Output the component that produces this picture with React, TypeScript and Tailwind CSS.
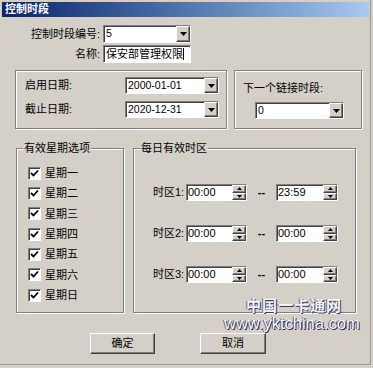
import React from 'react'

const FONT = "font-['Liberation_Sans','Noto_Sans_CJK_SC',sans-serif]"

const sunken =
  'border border-t-[#808080] border-l-[#808080] border-b-white border-r-white bg-white shadow-[inset_1px_1px_0_#404040]'
const raised =
  'bg-[#d4d0c8] border border-t-white border-l-white border-b-[#404040] border-r-[#404040] shadow-[inset_-1px_-1px_0_#808080]'
const etched = 'border border-[#808080] shadow-[inset_1px_1px_0_white,1px_1px_0_white]'

const Arrow = ({ up = false, w = 7, h = 4 }: { up?: boolean; w?: number; h?: number }) => (
  <svg width={w} height={h} viewBox="0 0 7 4">
    {up ? <polygon points="0,4 7,4 3.5,0" fill="#000" /> : <polygon points="0,0 7,0 3.5,4" fill="#000" />}
  </svg>
)

interface ComboProps {
  value: string;
  className?: string;
}

const Combo: React.FC<ComboProps> = ({ value, className = '' }) => (
  <div className={`flex items-stretch h-[17px] ${sunken} ${className}`}>
    <span className="flex-1 pl-[2px] text-[10.5px] leading-[15px] text-black whitespace-nowrap">{value}</span>
    <div className={`w-[14px] flex items-center justify-center ${raised}`}>
      <Arrow />
    </div>
  </div>
)

const TimeBox: React.FC<{ value: string; className?: string }> = ({ value, className = '' }) => (
  <div className={`flex items-stretch h-[17px] ${sunken} ${className}`}>
    <span className="flex-1 pl-[1px] text-[11px] leading-[15px] text-black">{value}</span>
    <div className="w-[14px] flex flex-col">
      <div className={`flex-1 flex items-center justify-center ${raised}`}>
        <Arrow up w={5} h={3} />
      </div>
      <div className={`flex-1 flex items-center justify-center ${raised}`}>
        <Arrow w={5} h={3} />
      </div>
    </div>
  </div>
)

const CheckBox = () => (
  <div className={`w-[13px] h-[13px] flex items-center justify-center ${sunken}`}>
    <svg width="9" height="9" viewBox="0 0 9 9">
      <path d="M1 4 L3.5 6.5 L8 1.5" stroke="#000" strokeWidth="1.8" fill="none" />
    </svg>
  </div>
)

const days = ['星期一', '星期二', '星期三', '星期四', '星期五', '星期六', '星期日']
const zones = [
  { label: '时区1:', from: '00:00', to: '23:59' },
  { label: '时区2:', from: '00:00', to: '00:00' },
  { label: '时区3:', from: '00:00', to: '00:00' },
]

export default function App() {
  return (
    <div className={`w-[373px] h-[368px] bg-[#d4d0c8] relative overflow-hidden text-[11px] text-black ${FONT}`}>
      <div className="w-[371px] h-[365px] border-r border-b border-[#9c9a94] flex flex-col">
        {/* Title bar */}
        <div className="ml-[2px] mr-[1px] mt-[2px] h-[15px] bg-gradient-to-r from-[#0a246a] to-[#a6caf0] flex items-center pl-[3px]">
          <span className="text-white font-bold text-[11px] leading-none">控制时段</span>
        </div>

        {/* Top fields */}
        <div className="mt-[8px] flex items-center h-[18px] whitespace-nowrap">
          <span className="w-[101px] text-right pr-[1px]">控制时段编号:</span>
          <Combo value="5" className="ml-[2px] w-[88px] h-[18px]" />
        </div>
        <div className="mt-[2px] flex items-center h-[18px] whitespace-nowrap">
          <span className="w-[101px] text-right pr-[1px]">名称:</span>
          <div className={`ml-[2px] w-[88px] h-[18px] flex items-center ${sunken}`}>
            <span className="pl-[2px] leading-[15px]">保安部管理权限</span>
            <span className="w-px h-[12px] bg-black" />
          </div>
        </div>

        {/* Date groups */}
        <div className="mt-[7px] flex pl-[15px] gap-[7px] whitespace-nowrap">
          <div className={`w-[212px] h-[59px] ${etched} flex flex-col pt-[6px] pl-[9px] gap-[7px]`}>
            <div className="flex items-center h-[17px]">
              <span className="w-[100px]">启用日期:</span>
              <Combo value="2000-01-01" className="w-[94px]" />
            </div>
            <div className="flex items-center h-[17px]">
              <span className="w-[100px]">截止日期:</span>
              <Combo value="2020-12-31" className="w-[94px]" />
            </div>
          </div>
          <div className={`w-[128px] h-[59px] ${etched} flex flex-col pl-[8px] pt-[10px]`}>
            <span className="leading-[14px]">下一个链接时段:</span>
            <Combo value="0" className="ml-[12px] mt-[7px] w-[89px]" />
          </div>
        </div>

        {/* Week / time groups */}
        <div className="mt-[19px] flex pl-[16px] gap-[9px] whitespace-nowrap">
          <div className={`relative w-[108px] h-[165px] ${etched} flex flex-col pt-[14px] pl-[11px]`}>
            <span className="absolute -top-[8px] left-[6px] px-[1px] bg-[#d4d0c8] leading-[14px]">有效星期选项</span>
            {days.map((d) => (
              <div key={d} className="h-[20.33px] flex items-center gap-[4px]">
                <CheckBox />
                <span className="leading-[14px]">{d}</span>
              </div>
            ))}
          </div>
          <div className={`relative w-[223px] h-[165px] ${etched} flex flex-col pt-[35px] pl-[19px] gap-[24px]`}>
            <span className="absolute -top-[8px] left-[6px] px-[1px] bg-[#d4d0c8] leading-[14px]">每日有效时区</span>
            {zones.map((z) => (
              <div key={z.label} className="flex items-center h-[17px]">
                <span className="w-[33px]">{z.label}</span>
                <TimeBox value={z.from} className="w-[61px]" />
                <span className="w-[29px] text-center font-bold">--</span>
                <TimeBox value={z.to} className="w-[62px]" />
              </div>
            ))}
          </div>
        </div>

        {/* Buttons */}
        <div className="mt-[20px] flex pl-[90px] gap-[45px]">
          <button className={`w-[65px] h-[21px] flex items-center justify-center ${raised}`}>确定</button>
          <button className={`w-[66px] h-[21px] flex items-center justify-center ${raised}`}>取消</button>
        </div>
      </div>

      {/* Watermark */}
      <div className="absolute left-[246px] top-[294px] text-[15px] tracking-[1px] text-[#f4f4f8] font-['Noto_Sans_CJK_SC',sans-serif] font-bold [text-shadow:1px_1px_0_#3a3a5a,-1px_0_0_#6a6a8a]">
        中国一卡通网
      </div>
      <div className="absolute left-[224px] top-[314px] text-[16.5px] leading-[18px] text-[#f8f8fc] font-['Liberation_Sans',sans-serif] [text-shadow:1px_1px_0_#2a2a4a,-1px_0_0_#5a5a7a]">
        www.yktchina.com
      </div>
    </div>
  )
}
